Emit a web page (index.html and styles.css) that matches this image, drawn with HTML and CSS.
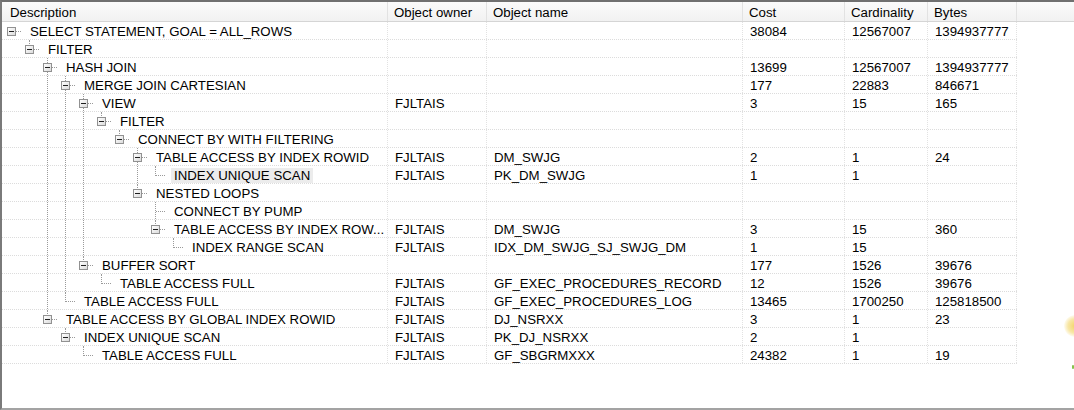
FILE: index.html
```html
<!DOCTYPE html>
<html>
<head>
<meta charset="utf-8">
<link rel="stylesheet" href="styles.css">
</head>
<body>
<div class="grid">
  <div class="header">
    <div class="hc c-desc">Description</div>
    <div class="hc c-owner">Object owner</div>
    <div class="hc c-name">Object name</div>
    <div class="hc c-cost">Cost</div>
    <div class="hc c-card">Cardinality</div>
    <div class="hc c-bytes">Bytes</div>
    <div class="hc c-fill"></div>
  </div>
  <div class="rows">
    <div class="row">
      <div class="cell c-desc"><i class="g r"><b class="box"></b></i><span class="lbl">SELECT STATEMENT, GOAL = ALL_ROWS</span></div>
      <div class="cell c-owner"></div><div class="cell c-name"></div>
      <div class="cell c-cost">38084</div><div class="cell c-card">12567007</div><div class="cell c-bytes">1394937777</div>
    </div>
    <div class="row">
      <div class="cell c-desc"><i class="g"></i><i class="g l"><b class="box"></b></i><span class="lbl">FILTER</span></div>
      <div class="cell c-owner"></div><div class="cell c-name"></div>
      <div class="cell c-cost"></div><div class="cell c-card"></div><div class="cell c-bytes"></div>
    </div>
    <div class="row">
      <div class="cell c-desc"><i class="g"></i><i class="g"></i><i class="g t"><b class="box"></b></i><span class="lbl">HASH JOIN</span></div>
      <div class="cell c-owner"></div><div class="cell c-name"></div>
      <div class="cell c-cost">13699</div><div class="cell c-card">12567007</div><div class="cell c-bytes">1394937777</div>
    </div>
    <div class="row">
      <div class="cell c-desc"><i class="g"></i><i class="g"></i><i class="g v"></i><i class="g t"><b class="box"></b></i><span class="lbl">MERGE JOIN CARTESIAN</span></div>
      <div class="cell c-owner"></div><div class="cell c-name"></div>
      <div class="cell c-cost">177</div><div class="cell c-card">22883</div><div class="cell c-bytes">846671</div>
    </div>
    <div class="row">
      <div class="cell c-desc"><i class="g"></i><i class="g"></i><i class="g v"></i><i class="g v"></i><i class="g t"><b class="box"></b></i><span class="lbl">VIEW</span></div>
      <div class="cell c-owner">FJLTAIS</div><div class="cell c-name"></div>
      <div class="cell c-cost">3</div><div class="cell c-card">15</div><div class="cell c-bytes">165</div>
    </div>
    <div class="row">
      <div class="cell c-desc"><i class="g"></i><i class="g"></i><i class="g v"></i><i class="g v"></i><i class="g v"></i><i class="g l"><b class="box"></b></i><span class="lbl">FILTER</span></div>
      <div class="cell c-owner"></div><div class="cell c-name"></div>
      <div class="cell c-cost"></div><div class="cell c-card"></div><div class="cell c-bytes"></div>
    </div>
    <div class="row">
      <div class="cell c-desc"><i class="g"></i><i class="g"></i><i class="g v"></i><i class="g v"></i><i class="g v"></i><i class="g"></i><i class="g l"><b class="box"></b></i><span class="lbl">CONNECT BY WITH FILTERING</span></div>
      <div class="cell c-owner"></div><div class="cell c-name"></div>
      <div class="cell c-cost"></div><div class="cell c-card"></div><div class="cell c-bytes"></div>
    </div>
    <div class="row">
      <div class="cell c-desc"><i class="g"></i><i class="g"></i><i class="g v"></i><i class="g v"></i><i class="g v"></i><i class="g"></i><i class="g"></i><i class="g t"><b class="box"></b></i><span class="lbl">TABLE ACCESS BY INDEX ROWID</span></div>
      <div class="cell c-owner">FJLTAIS</div><div class="cell c-name">DM_SWJG</div>
      <div class="cell c-cost">2</div><div class="cell c-card">1</div><div class="cell c-bytes">24</div>
    </div>
    <div class="row">
      <div class="cell c-desc"><i class="g"></i><i class="g"></i><i class="g v"></i><i class="g v"></i><i class="g v"></i><i class="g"></i><i class="g"></i><i class="g v"></i><i class="g l"></i><span class="lbl sel">INDEX UNIQUE SCAN</span></div>
      <div class="cell c-owner">FJLTAIS</div><div class="cell c-name">PK_DM_SWJG</div>
      <div class="cell c-cost">1</div><div class="cell c-card">1</div><div class="cell c-bytes"></div>
    </div>
    <div class="row">
      <div class="cell c-desc"><i class="g"></i><i class="g"></i><i class="g v"></i><i class="g v"></i><i class="g v"></i><i class="g"></i><i class="g"></i><i class="g l"><b class="box"></b></i><span class="lbl">NESTED LOOPS</span></div>
      <div class="cell c-owner"></div><div class="cell c-name"></div>
      <div class="cell c-cost"></div><div class="cell c-card"></div><div class="cell c-bytes"></div>
    </div>
    <div class="row">
      <div class="cell c-desc"><i class="g"></i><i class="g"></i><i class="g v"></i><i class="g v"></i><i class="g v"></i><i class="g"></i><i class="g"></i><i class="g"></i><i class="g t"></i><span class="lbl">CONNECT BY PUMP</span></div>
      <div class="cell c-owner"></div><div class="cell c-name"></div>
      <div class="cell c-cost"></div><div class="cell c-card"></div><div class="cell c-bytes"></div>
    </div>
    <div class="row">
      <div class="cell c-desc"><i class="g"></i><i class="g"></i><i class="g v"></i><i class="g v"></i><i class="g v"></i><i class="g"></i><i class="g"></i><i class="g"></i><i class="g l"><b class="box"></b></i><span class="lbl">TABLE ACCESS BY INDEX ROW...</span></div>
      <div class="cell c-owner">FJLTAIS</div><div class="cell c-name">DM_SWJG</div>
      <div class="cell c-cost">3</div><div class="cell c-card">15</div><div class="cell c-bytes">360</div>
    </div>
    <div class="row">
      <div class="cell c-desc"><i class="g"></i><i class="g"></i><i class="g v"></i><i class="g v"></i><i class="g v"></i><i class="g"></i><i class="g"></i><i class="g"></i><i class="g"></i><i class="g l"></i><span class="lbl">INDEX RANGE SCAN</span></div>
      <div class="cell c-owner">FJLTAIS</div><div class="cell c-name">IDX_DM_SWJG_SJ_SWJG_DM</div>
      <div class="cell c-cost">1</div><div class="cell c-card">15</div><div class="cell c-bytes"></div>
    </div>
    <div class="row">
      <div class="cell c-desc"><i class="g"></i><i class="g"></i><i class="g v"></i><i class="g v"></i><i class="g l"><b class="box"></b></i><span class="lbl">BUFFER SORT</span></div>
      <div class="cell c-owner"></div><div class="cell c-name"></div>
      <div class="cell c-cost">177</div><div class="cell c-card">1526</div><div class="cell c-bytes">39676</div>
    </div>
    <div class="row">
      <div class="cell c-desc"><i class="g"></i><i class="g"></i><i class="g v"></i><i class="g v"></i><i class="g"></i><i class="g l"></i><span class="lbl">TABLE ACCESS FULL</span></div>
      <div class="cell c-owner">FJLTAIS</div><div class="cell c-name">GF_EXEC_PROCEDURES_RECORD</div>
      <div class="cell c-cost">12</div><div class="cell c-card">1526</div><div class="cell c-bytes">39676</div>
    </div>
    <div class="row">
      <div class="cell c-desc"><i class="g"></i><i class="g"></i><i class="g v"></i><i class="g l"></i><span class="lbl">TABLE ACCESS FULL</span></div>
      <div class="cell c-owner">FJLTAIS</div><div class="cell c-name">GF_EXEC_PROCEDURES_LOG</div>
      <div class="cell c-cost">13465</div><div class="cell c-card">1700250</div><div class="cell c-bytes">125818500</div>
    </div>
    <div class="row">
      <div class="cell c-desc"><i class="g"></i><i class="g"></i><i class="g l"><b class="box"></b></i><span class="lbl">TABLE ACCESS BY GLOBAL INDEX ROWID</span></div>
      <div class="cell c-owner">FJLTAIS</div><div class="cell c-name">DJ_NSRXX</div>
      <div class="cell c-cost">3</div><div class="cell c-card">1</div><div class="cell c-bytes">23</div>
    </div>
    <div class="row">
      <div class="cell c-desc"><i class="g"></i><i class="g"></i><i class="g"></i><i class="g l"><b class="box"></b></i><span class="lbl">INDEX UNIQUE SCAN</span></div>
      <div class="cell c-owner">FJLTAIS</div><div class="cell c-name">PK_DJ_NSRXX</div>
      <div class="cell c-cost">2</div><div class="cell c-card">1</div><div class="cell c-bytes"></div>
    </div>
    <div class="row">
      <div class="cell c-desc"><i class="g"></i><i class="g"></i><i class="g"></i><i class="g"></i><i class="g l"></i><span class="lbl">TABLE ACCESS FULL</span></div>
      <div class="cell c-owner">FJLTAIS</div><div class="cell c-name">GF_SBGRMXXX</div>
      <div class="cell c-cost">24382</div><div class="cell c-card">1</div><div class="cell c-bytes">19</div>
    </div>
  </div>
  <div class="blob"></div>
  <div class="dot"></div>
</div>
</body>
</html>
```
FILE: styles.css
```css
html, body {
  margin: 0;
  padding: 0;
  background: #ffffff;
}
body {
  font-family: "Liberation Sans", Arial, sans-serif;
  font-size: 13.25px;
  color: #000;
}
.grid {
  position: relative;
  width: 1074px;
  height: 410px;
  box-sizing: border-box;
  border-top: 2px solid #707070;
  border-left: 2px solid #7a7a7a;
  border-bottom: 2px solid #a3a3a3;
  overflow: hidden;
  background: #fff;
}
.header {
  display: flex;
  height: 20px;
  box-sizing: border-box;
  border-bottom: 1px solid #d5d5d5;
  background: linear-gradient(#fbfbfb, #f1f1f1);
}
.hc {
  flex: none;
  box-sizing: border-box;
  border-right: 1px solid #e2e2e2;
  padding-left: 6px;
  padding-top: 2px;
  line-height: 18px;
  white-space: nowrap;
}
.hc.c-desc { padding-left: 8px; }
.hc.c-fill { flex: 1; border-right: 0; }
.c-desc { width: 386px; }
.c-owner { width: 99px; }
.c-name { width: 256px; }
.c-cost { width: 102px; }
.c-card { width: 83px; }
.c-bytes { width: 89px; }
.rows {
  width: 1015px;
}
.row {
  display: flex;
  height: 18px;
  box-sizing: border-box;
  border-bottom: 1px dotted #dcdcdc;
}
.cell {
  flex: none;
  box-sizing: border-box;
  height: 17px;
  line-height: 19px;
  border-right: 1px dotted #e2e2e2;
  padding-left: 7px;
  white-space: nowrap;
  overflow: hidden;
}
.cell.c-desc {
  padding-left: 0;
  display: flex;
  align-items: flex-start;
}
.g {
  flex: none;
  position: relative;
  width: 18px;
  height: 17px;
}
.g.v::before,
.g.t::before,
.g.l::before {
  content: "";
  position: absolute;
  left: 9px;
  top: 0;
  height: 17px;
  border-left: 1px dotted #9a9a9a;
}
.g.l::before { height: 10px; }
.g.t::after,
.g.l::after,
.g.r::after {
  content: "";
  position: absolute;
  left: 10px;
  top: 9px;
  width: 9px;
  border-top: 1px dotted #9a9a9a;
}
.box {
  position: absolute;
  left: 5px;
  top: 5px;
  width: 9px;
  height: 9px;
  box-sizing: border-box;
  border: 1px solid #919191;
  background: linear-gradient(135deg, #ffffff, #dcdcdc);
  z-index: 1;
}
.box::after {
  content: "";
  position: absolute;
  left: 1px;
  top: 3px;
  width: 5px;
  height: 1px;
  background: #1f1f1f;
}
.lbl {
  margin-left: 7px;
  margin-top: 2px;
  padding: 0 3px;
  height: 15px;
  line-height: 15px;
  white-space: nowrap;
}
.lbl.sel {
  background: #ececec;
}
.blob {
  position: absolute;
  right: -12px;
  top: 313px;
  width: 22px;
  height: 22px;
  border-radius: 50%;
  background: radial-gradient(circle, #f3d46a 0%, #f8e7a6 45%, rgba(255,255,255,0) 75%);
}
.dot {
  position: absolute;
  right: 0;
  top: 363px;
  width: 2px;
  height: 4px;
  background: #86c34c;
  border-radius: 1px;
}
```
